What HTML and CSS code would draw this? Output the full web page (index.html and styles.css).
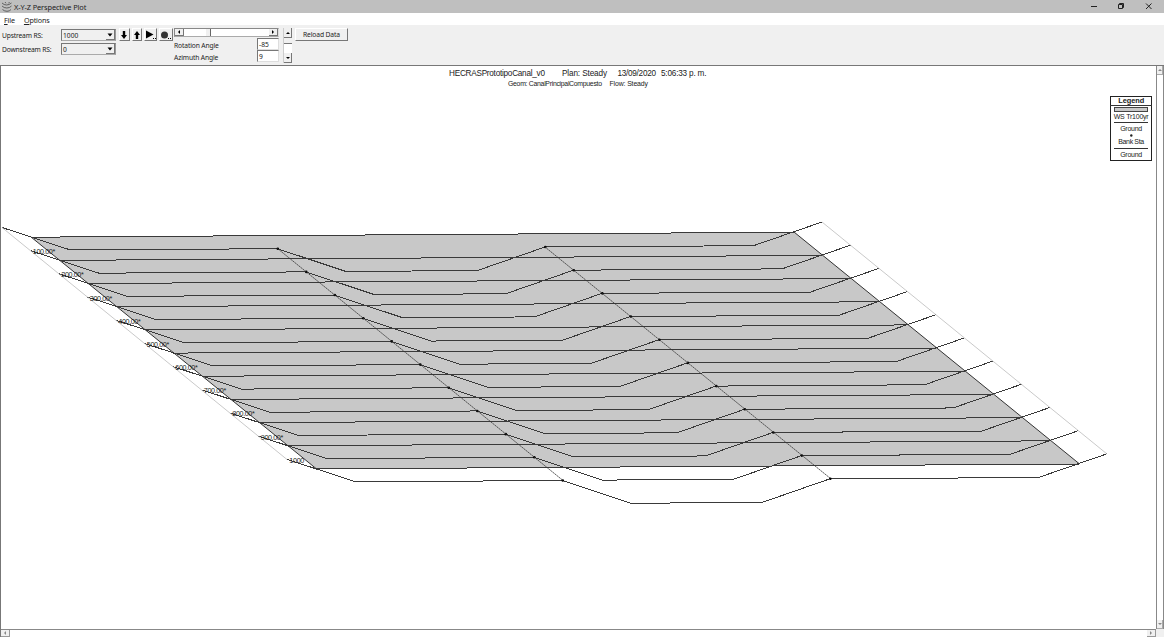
FILE: index.html
```html
<!DOCTYPE html>
<html lang="en">
<head>
<meta charset="utf-8">
<title>X-Y-Z Perspective Plot</title>
<link rel="stylesheet" href="styles.css">
</head>
<body>
<div class="window">
  <header class="titlebar">
    <svg class="app-icon" width="12" height="12" viewBox="0 0 12 12"><path d="M1 2Q3 4 5.500 4T10.500 2M1 5Q3 7 5.800 7T10.500 5M1.500 8.500Q3.500 10.300 6 10.300T10 8.500M4 1L5 2.300M7.500 2.300L8.500 1"/></svg>
    <span class="title">X-Y-Z Perspective Plot</span>
    <svg class="controls" width="76" height="13" viewBox="0 0 76 13"><path d="M3 6.500H9M30.500 4.500H34.500V8.500H30.500ZM31.500 4.500V3.500H35.500V7.500H34.500M58 3.500L63.500 9M63.500 3.500L58 9"/></svg>
  </header>
  <nav class="menu"><span><u>F</u>ile</span><span><u>O</u>ptions</span></nav>
  <section class="toolbar">
    <div class="stations">
      <label>Upstream RS:</label>
      <div class="combo"><span>1000</span><i class="drop"><svg width="6" height="4"><path d="M0.500 0.500H5.500L3 3.500Z"/></svg></i></div>
      <label>Downstream RS:</label>
      <div class="combo"><span>0</span><i class="drop"><svg width="6" height="4"><path d="M0.500 0.500H5.500L3 3.500Z"/></svg></i></div>
    </div>
    <div class="buttons">
      <button class="btn"><svg width="8" height="10"><path d="M2.800 1H5.200V5H7L4 9L1 5H2.800Z"/></svg></button>
      <button class="btn"><svg width="8" height="10"><path d="M2.800 9H5.200V5H7L4 1L1 5H2.800Z"/></svg></button>
      <button class="btn wide"><svg width="12" height="10"><path d="M1 0.500L8.500 4.500L1 8.500ZM8 8h1v1h-1zM10 8h1v1h-1z"/></svg></button>
      <button class="btn wider"><svg width="12" height="10"><circle class="record" cx="4.500" cy="5" r="3.500"/><path d="M8 8h1v1h-1zM10 8h1v1h-1z"/></svg></button>
    </div>
    <div class="angles">
      <div class="hslider"><i class="arrow"><svg width="4" height="4"><path d="M3 0V4L1 2Z"/></svg></i><i class="thumb"></i><i class="arrow"><svg width="4" height="4"><path d="M1 0V4L3 2Z"/></svg></i></div>
      <div class="field"><label>Rotation Angle</label><span class="input">-85</span></div>
      <div class="field"><label>Azimuth Angle</label><span class="input">9</span></div>
    </div>
    <div class="vslider"><i class="arrow"><svg width="4" height="4"><path d="M0 3H4L2 1Z"/></svg></i><i class="thumb"></i><i class="arrow"><svg width="4" height="4"><path d="M0 1H4L2 3Z"/></svg></i></div>
    <button class="reload">Reload Data</button>
  </section>
  <main class="work">
    <svg class="plot" width="1155" height="563" viewBox="1 66 1155 563">
      <g class="heading">
        <text x="449" y="76.200" textLength="96">HECRASPrototipoCanal_v0</text>
        <text x="562" y="76.200" textLength="45">Plan: Steady</text>
        <text x="617.500" y="76.200" textLength="38.500">13/09/2020</text>
        <text x="661" y="76.200" textLength="45.500">5:06:33 p. m.</text>
      </g>
      <g class="subheading">
        <text x="508" y="85.700" textLength="94">Geom: CanalPrincipalCompuesto</text>
        <text x="609.500" y="85.700" textLength="38.500">Flow: Steady</text>
      </g>
      <polygon class="water" points="31,237 794,232 1079,463.500 316,468.500"/>
      <g id="sections"></g>
      <path class="edge" d="M2 227.500L287 459.500M822 222L1107 454"/>
      <path class="waterline" d="M31 237L316 468.500M794 232L1079 463.500"/>
      <path class="bank" d="M277.500 248.500L563 480.500M545 247L830.500 478.500"/>
      <g id="labels" class="labels"></g>
      <g class="legend">
        <rect class="box" x="1110.500" y="96.500" width="41" height="64"/>
        <path class="rule" d="M1110 105.500H1152M1114 122.500H1148M1114 148.500H1148"/>
        <rect class="swatch" x="1114.500" y="107.500" width="33" height="4"/>
        <text class="legend-title" x="1131.200" y="103.300" textLength="26">Legend</text>
        <text x="1131.200" y="118.500" textLength="35">WS Tr100yr</text>
        <text x="1131.200" y="131.300" textLength="22">Ground</text>
        <circle cx="1131.300" cy="135.500" r="1.200"/>
        <text x="1131.200" y="144" textLength="26">Bank Sta</text>
        <text x="1131.200" y="157.300" textLength="22">Ground</text>
      </g>
    </svg>
    <div class="vscroll"><i class="arrow"><svg width="4" height="3"><path d="M0 2H4L2 0Z"/></svg></i><i class="arrow"><svg width="4" height="3"><path d="M0 0H4L2 2Z"/></svg></i></div>
    <div class="hscroll"><i class="arrow"><svg width="3" height="4"><path d="M2 0V4L0 2Z"/></svg></i><i class="arrow"><svg width="3" height="4"><path d="M0 0V4L2 2Z"/></svg></i></div>
    <div class="corner"></div>
  </main>
</div>
<script src="plot.js"></script>
</body>
</html>
```
FILE: styles.css
```css
* { box-sizing: border-box; }
body { margin: 0; background: #f0f0f0; font-family: "Noto Sans", "Open Sans", sans-serif; color: #222; }
svg { display: block; }
i { font-style: normal; }
.window { width: 1164px; height: 637px; display: flex; flex-direction: column; overflow: hidden; }
.titlebar { height: 13px; background: #bfbfbf; display: flex; align-items: center; font-size: 7.4px; padding-left: 1px; flex: none; }
.title { margin-left: 1px; line-height: 13px; padding-top: 1px; color: #222; letter-spacing: -0.12px; }
.app-icon path { fill: none; stroke: #555; stroke-width: 0.9; }
.controls { margin-left: auto; }
.controls path { fill: none; stroke: #222; stroke-width: 1; }
.menu { height: 12px; background: #fff; display: flex; gap: 9px; padding-left: 4px; font-size: 7.2px; line-height: 14px; flex: none; letter-spacing: -0.15px; }
.menu u { text-underline-offset: 1px; text-decoration-thickness: 1px; }
.toolbar { height: 40px; background: #f0f0f0; display: flex; align-items: flex-start; padding: 3px 0 0 2px; font-size: 6.7px; flex: none; }
.stations { display: grid; grid-template-columns: 59px 55px; grid-template-rows: 12px 12px; row-gap: 2px; padding-top: 1px; width: 117px; }
.stations label { line-height: 13px; white-space: nowrap; letter-spacing: -0.15px; }
.combo { height: 12px; border: 1px solid #777; border-right-color: #999; border-bottom-color: #aaa; display: flex; justify-content: space-between; line-height: 12px; padding-left: 1px; }
.drop { width: 9px; background: #f0f0f0; border-right: 1px solid #777; border-bottom: 1px solid #777; display: flex; align-items: center; justify-content: center; }
.buttons { display: flex; gap: 2px; width: 55px; }
.btn { width: 10.500px; height: 13px; padding: 0; margin: 0; background: #f0f0f0; border: 1px solid #fff; border-right-color: #777; border-bottom-color: #777; display: flex; align-items: center; justify-content: center; flex: none; }
.wide { width: 13px; }
.wider { width: 14px; }
.record { fill: #333; }
.angles { width: 105px; }
.hslider { height: 9px; border: 1px solid #888; border-right-color: #ddd; border-bottom-color: #aaa; background: #fff; display: flex; margin-left: 0; }
.arrow { width: 9px; background: #f0f0f0; border-right: 1px solid #777; border-bottom: 1px solid #777; display: flex; align-items: center; justify-content: center; flex: none; }
.hslider .thumb { width: 5px; margin-left: 22px; margin-right: auto; background: #f0f0f0; border-right: 1px solid #666; }
.hslider .arrow svg, .vslider .arrow svg { width: 4px; height: 4px; }
.field { display: flex; justify-content: space-between; height: 12px; line-height: 14px; }
.field:nth-child(2) { margin-top: 1px; }
.field label { letter-spacing: -0.12px; padding-top: 1px; }
.input { width: 22px; height: 12px; border: 1px solid #777; border-right-color: #ddd; border-bottom-color: #ddd; background: #fff; line-height: 11px; padding-left: 1px; }
.vslider { width: 9px; height: 35px; background: #fff; border-left: 1px solid #ccc; margin-left: 4px; display: flex; flex-direction: column; justify-content: space-between; }
.vslider .arrow { width: 8px; height: 10px; }
.vslider .thumb { height: 6px; background: #f0f0f0; border-bottom: 1px solid #777; margin-bottom: 9px; }
.reload { width: 53px; height: 13px; margin: 0 0 0 3px; padding: 0; border: 1px solid #fff; border-right-color: #777; border-bottom-color: #777; background: #f0f0f0; font: 6.7px "Noto Sans", sans-serif; line-height: 11px; letter-spacing: -0.1px; color: #222; }
.work { display: grid; grid-template-columns: 1155px 8px; grid-template-rows: 563px 8px; border-left: 1px solid #777; border-top: 1px solid #777; flex: 1; }
.plot { background: #fff; font-family: "Liberation Sans", Arial, sans-serif; }
.vscroll, .hscroll { background: #fff; display: flex; justify-content: space-between; border: 0 solid #888; }
.vscroll { flex-direction: column; border-left-width: 1px; border-right-width: 1px; }
.hscroll { border-top-width: 1px; }
.vscroll .arrow { height: 9px; width: 6px; border-color: #aaa; }
.hscroll .arrow { width: 9px; border-color: #999; }
.vscroll path, .hscroll path { fill: #888; }
.corner { background: #f0f0f0; }
.heading { font-size: 8.200px; fill: #222; }
.subheading { font-size: 6.900px; fill: #222; }
.water { fill: #c8c8c8; shape-rendering: crispEdges; }
.section { fill: none; stroke: #3a3a3a; stroke-width: 1; shape-rendering: crispEdges; }
.edge { fill: none; stroke: #bbb; stroke-width: 0.8; }
.waterline { fill: none; stroke: #333; stroke-width: 1; }
.bank { fill: none; stroke: #333; stroke-width: 0.8; stroke-dasharray: 2 0.500; }
.labels { font-size: 7.200px; fill: #222; }
.legend { font-size: 7px; text-anchor: middle; fill: #222; }
.legend-title { font-weight: bold; font-size: 7.400px; }
.box { fill: #fff; stroke: #222; }
.rule { stroke: #333; }
.swatch { fill: #c8c8c8; stroke: #444; }
```
FILE: plot.js
```js
const NS = "http://www.w3.org/2000/svg";
const ground = [[2, 227.5], [70.5, 250], [277.5, 248.7], [346, 271.5], [477.5, 270.5], [545, 247], [753.5, 245.7], [822, 222]];
const water = [[31, 237.2], [794, 232.2]];
const sections = document.getElementById("sections");
const labels = document.getElementById("labels");

function add(parent, name, attrs) {
  const el = document.createElementNS(NS, name);
  for (const key in attrs) el.setAttribute(key, attrs[key]);
  parent.appendChild(el);
  return el;
}

// Each river station is the same cross section shifted along the reach.
for (let k = 0; k <= 10; k++) {
  const move = ([x, y]) => [x + 28.5 * k, y + 23.18 * k];
  for (const line of [ground, water]) {
    add(sections, "polyline", { class: "section", points: line.map(move).join(" ") });
  }
  for (const bank of [ground[2], ground[5]]) {
    const [cx, cy] = move(bank);
    add(sections, "circle", { cx: cx + 0.3, cy, r: 1.3 });
  }
  if (k > 0) {
    const [x, y] = move([4.3, 231]);
    const label = add(labels, "text", { x, y, textLength: k < 10 ? 22.5 : 15 });
    label.textContent = k < 10 ? k * 100 + ".00*" : "1000";
  }
}
```
